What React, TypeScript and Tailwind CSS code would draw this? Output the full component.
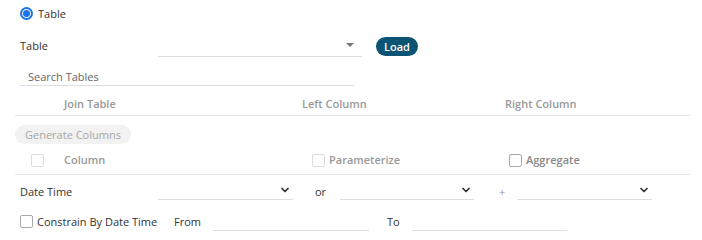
import { ChevronDown } from 'lucide-react'

const LINE = 'border-b border-[#dedede]'

function Box({ className = '' }: { className?: string }) {
  return <span className={`inline-block w-[13px] h-[13px] border border-[#a9a9a9] rounded-[2px] bg-white ${className}`} />
}

function Select({ w, arrow = 'chevron' }: { w: string; arrow?: 'chevron' | 'caret' }) {
  return (
    <div className={`${w} h-[22px] ${LINE} flex items-center justify-end ${arrow === 'chevron' ? 'pr-[2px]' : 'pr-[8px]'}`}>
      {arrow === 'chevron' ? (
        <ChevronDown size={12} strokeWidth={3.5} className="text-[#333] mt-[2px]" />
      ) : (
        <span className="w-0 h-0 border-l-[4px] border-r-[4px] border-t-[4px] border-l-transparent border-r-transparent border-t-[#777] mb-[2px]" />
      )}
    </div>
  )
}

export default function App() {
  return (
    <div className="w-[702px] h-[240px] bg-white text-[11px] text-[#333] font-['Open_Sans',sans-serif] relative overflow-hidden">
      {/* data source radio */}
      <div className="h-[28px] pl-[20px] flex items-center gap-[5px]">
        <span className="w-[13px] h-[13px] mb-[2px] rounded-full border-[2px] border-[#1a73e8] flex items-center justify-center">
          <span className="w-[7px] h-[7px] rounded-full bg-[#1a73e8]" />
        </span>
        <span className="leading-none mb-[2px]">Table</span>
      </div>

      {/* table select */}
      <div className="h-[36px] pl-[20px] flex items-center">
        <span className="w-[138px]">Table</span>
        <Select w="w-[204px]" arrow="caret" />
        <button className="ml-[14px] h-[19px] px-[8px] rounded-full bg-[#0c5374] text-white font-semibold text-[11px] leading-none">
          Load
        </button>
      </div>

      {/* search */}
      <div className="ml-[20px] w-[334px] h-[22px] pt-[5px] border-b border-[#dedede] flex items-center pl-[8px] text-[#666]">
        Search Tables
      </div>

      {/* join header */}
      <div className="ml-[15px] mr-[12px] mt-[6px] h-[24px] pt-[2px] border-b border-[#e3e3e3] grid grid-cols-[287px_203px_1fr] items-center font-semibold text-[#999]">
        <span className="pl-[49px]">Join Table</span>
        <span>Left Column</span>
        <span>Right Column</span>
      </div>

      {/* generate */}
      <div className="pl-[15px] pt-[9px]">
        <button className="h-[19px] px-[10px] rounded-full bg-[#f2f2f2] text-[#a6a6a6] text-[11px] leading-none">
          Generate Columns
        </button>
      </div>

      {/* column header */}
      <div className="ml-[15px] mr-[12px] h-[31px] pt-[2px] border-b border-[#e3e3e3] grid grid-cols-[297px_197px_1fr] items-center font-semibold text-[#999]">
        <span className="flex items-center">
          <Box className="ml-[16px] border-[#dcdcdc]" />
          <span className="ml-[20px]">Column</span>
        </span>
        <span className="flex items-center gap-[4px]">
          <Box className="border-[#dcdcdc]" />
          Parameterize
        </span>
        <span className="flex items-center gap-[4px] text-[#888]">
          <Box className="border-[#999]" />
          Aggregate
        </span>
      </div>

      {/* date time */}
      <div className="h-[28px] pl-[20px] flex items-center">
        <span className="w-[138px] mt-[6px]">Date Time</span>
        <Select w="w-[135px]" />
        <span className="w-[47px] pl-[22px] mt-[6px]">or</span>
        <Select w="w-[134px]" />
        <span className="w-[43px] pl-[25px] mt-[6px] text-[#999]">+</span>
        <Select w="w-[135px]" />
      </div>

      {/* constrain */}
      <div className="h-[34px] pl-[20px] flex items-center">
        <Box className="border-[#999] mt-[2px]" />
        <span className="ml-[4px] w-[137px] mt-[4px]">Constrain By Date Time</span>
        <span className="w-[39px] mt-[5px]">From</span>
        <div className={`w-[156px] h-[22px] ${LINE}`} />
        <span className="w-[43px] pl-[18px] mt-[5px]">To</span>
        <div className={`w-[155px] h-[22px] ${LINE}`} />
      </div>
    </div>
  )
}
